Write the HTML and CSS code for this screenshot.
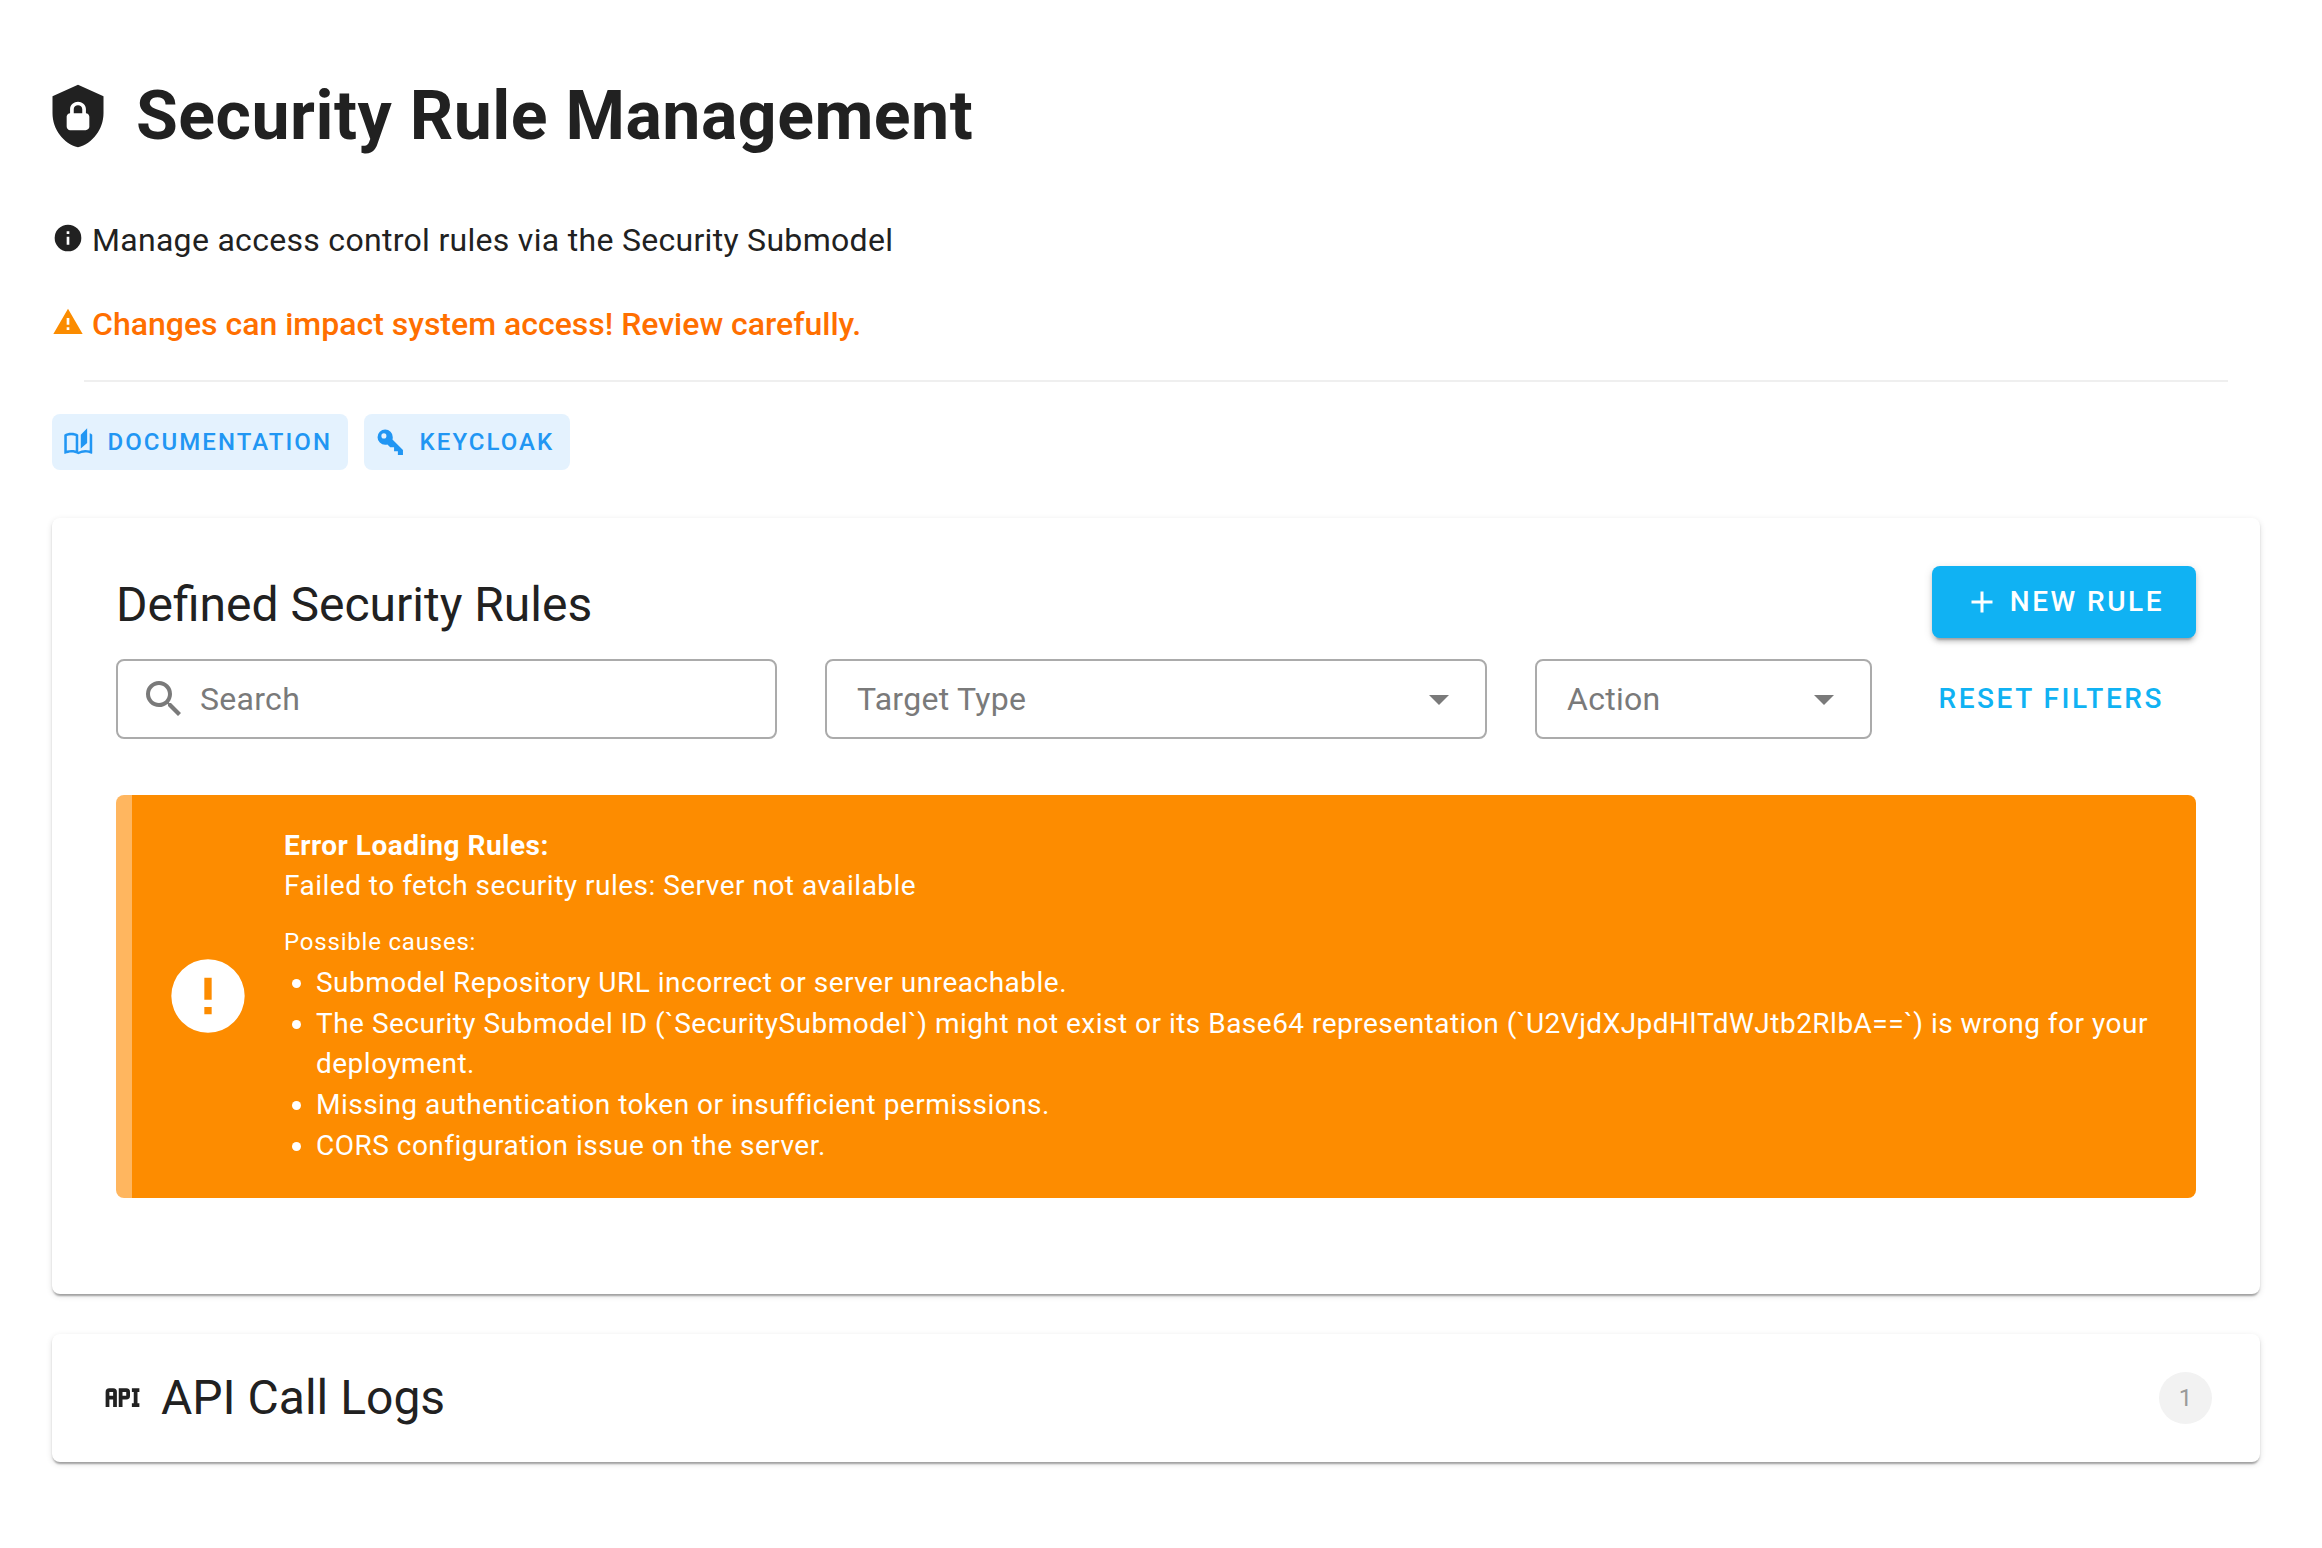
FILE: index.html
```html
<!DOCTYPE html>
<html lang="en">
<head>
<meta charset="utf-8">
<title>Security Rule Management</title>
<link rel="stylesheet" href="styles.css">
</head>
<body>
<main class="page">
  <header class="page-header">
    <h1 class="page-title">
      <svg class="title-icon" viewBox="0 0 24 24"><path d="M12,1L3,5V11C3,16.55 6.84,21.74 12,23C17.16,21.74 21,16.55 21,11V5L12,1M12,7C13.4,7 14.8,8.1 14.8,9.5V11C15.4,11 16,11.6 16,12.3V15.8C16,16.4 15.4,17 14.7,17H9.2C8.6,17 8,16.4 8,15.7V12.2C8,11.6 8.6,11 9.2,11V9.5C9.2,8.1 10.6,7 12,7M12,8.2C11.2,8.2 10.5,8.7 10.5,9.5V11H13.5V9.5C13.5,8.7 12.8,8.2 12,8.2Z"/></svg>
      <span>Security Rule Management</span>
    </h1>
    <p class="note">
      <svg class="note-icon" viewBox="0 0 24 24"><path d="M13,9H11V7H13M13,17H11V11H13M12,2A10,10 0 0,0 2,12A10,10 0 0,0 12,22A10,10 0 0,0 22,12A10,10 0 0,0 12,2Z"/></svg>
      <span>Manage access control rules via the Security Submodel</span>
    </p>
    <p class="note note-warning">
      <svg class="note-icon" viewBox="0 0 24 24"><path d="M13 14H11V9H13M13 18H11V16H13M1 21H23L12 2L1 21Z"/></svg>
      <span>Changes can impact system access! Review carefully.</span>
    </p>
  </header>
  <hr class="divider">
  <nav class="links">
    <a class="link-btn">
      <svg class="link-icon" viewBox="0 0 24 24"><path d="M19 1L14 6V17L19 12.5V1M21 5V18.5C19.9 18.15 18.7 18 17.5 18C15.8 18 13.35 18.65 12 19.5V6C10.55 4.9 8.45 4.5 6.5 4.5C4.55 4.5 2.45 4.9 1 6V20.65C1 20.9 1.25 21.15 1.5 21.15C1.6 21.15 1.65 21.1 1.75 21.1C3.1 20.45 5.05 20 6.5 20C8.45 20 10.55 20.4 12 21.5C13.35 20.65 15.8 20 17.5 20C19.15 20 20.85 20.3 22.25 21.05C22.35 21.1 22.4 21.1 22.5 21.1C22.75 21.1 23 20.85 23 20.6V6C22.4 5.55 21.75 5.25 21 5M10 18.41C8.75 18.09 7.5 18 6.5 18C5.44 18 4.18 18.19 3 18.5V7.13C3.91 6.73 5.14 6.5 6.5 6.5C7.86 6.5 9.09 6.73 10 7.13V18.41Z"/></svg>
      <span>DOCUMENTATION</span>
    </a>
    <a class="link-btn">
      <svg class="link-icon" viewBox="0 0 24 24"><path d="M22,18V22H18V19H15V16H12L9.74,13.74C9.19,13.91 8.61,14 8,14A6,6 0 0,1 2,8A6,6 0 0,1 8,2A6,6 0 0,1 14,8C14,8.61 13.91,9.19 13.74,9.74L22,18M7,5A2,2 0 0,0 5,7A2,2 0 0,0 7,9A2,2 0 0,0 9,7A2,2 0 0,0 7,5Z"/></svg>
      <span>KEYCLOAK</span>
    </a>
  </nav>

  <section class="card rules">
    <div class="rules-head">
      <h2 class="heading">Defined Security Rules</h2>
      <button class="btn btn-primary">
        <svg class="btn-icon" viewBox="0 0 24 24"><path d="M19,13H13V19H11V13H5V11H11V5H13V11H19V13Z"/></svg>
        <span>NEW RULE</span>
      </button>
    </div>
    <div class="filters">
      <div class="field">
        <svg class="field-icon" viewBox="0 0 24 24"><path d="M9.5,3A6.5,6.5 0 0,1 16,9.5C16,11.11 15.41,12.59 14.44,13.73L14.71,14H15.5L20.5,19L19,20.5L14,15.5V14.71L13.73,14.44C12.59,15.41 11.11,16 9.5,16A6.5,6.5 0 0,1 3,9.5A6.5,6.5 0 0,1 9.5,3M9.5,5C7,5 5,7 5,9.5C5,12 7,14 9.5,14C12,14 14,12 14,9.5C14,7 12,5 9.5,5Z"/></svg>
        <span>Search</span>
      </div>
      <div class="field field-select">
        <span>Target Type</span>
        <svg class="field-icon" viewBox="0 0 24 24"><path d="M7,10L12,15L17,10H7Z"/></svg>
      </div>
      <div class="field field-select">
        <span>Action</span>
        <svg class="field-icon" viewBox="0 0 24 24"><path d="M7,10L12,15L17,10H7Z"/></svg>
      </div>
      <button class="btn btn-text">RESET FILTERS</button>
    </div>
    <div class="alert">
      <svg class="alert-icon" viewBox="0 0 24 24"><path d="M13,13H11V7H13M13,17H11V15H13M12,2A10,10 0 0,0 2,12A10,10 0 0,0 12,22A10,10 0 0,0 22,12A10,10 0 0,0 12,2Z"/></svg>
      <div class="alert-body">
        <div class="alert-title">Error Loading Rules:</div>
        <div>Failed to fetch security rules: Server not available</div>
        <div class="alert-caption">Possible causes:</div>
        <ul class="causes">
          <li>Submodel Repository URL incorrect or server unreachable.</li>
          <li>The Security Submodel ID (`SecuritySubmodel`) might not exist or its Base64 representation (`U2VjdXJpdHlTdWJtb2RlbA==`) is wrong for your deployment.</li>
          <li>Missing authentication token or insufficient permissions.</li>
          <li>CORS configuration issue on the server.</li>
        </ul>
      </div>
    </div>
  </section>

  <section class="card logs">
    <svg class="logs-icon" viewBox="0 0 24 24"><path d="M7 7H5A2 2 0 0 0 3 9V17H5V13H7V17H9V9A2 2 0 0 0 7 7M7 11H5V9H7M14 7H10V17H12V13H14A2 2 0 0 0 16 11V9A2 2 0 0 0 14 7M14 11H12V9H14M20 9V15H21V17H17V15H18V9H17V7H21V9Z"/></svg>
    <h2 class="heading">API Call Logs</h2>
    <span class="count">1</span>
  </section>
</main>
</body>
</html>
```
FILE: styles.css
```css
* { box-sizing: border-box; margin: 0; padding: 0; }

body {
  background: #fff;
  color: #212121;
  font-family: Roboto, "Liberation Sans", sans-serif;
  font-size: 32px;
}

svg { display: block; flex: none; fill: currentColor; }

.page { padding: 76px 62px 84px 52px; }

.page-title {
  display: flex;
  align-items: center;
  gap: 24px;
  height: 80px;
  margin-left: -8px;
  font-size: 68px;
  font-weight: 700;
  line-height: 80px;
  letter-spacing: 0.5px;
}
.title-icon { width: 68px; height: 68px; margin-bottom: 1px; }

.note {
  display: flex;
  align-items: center;
  gap: 8px;
  height: 56px;
  margin-top: 56px;
  line-height: 56px;
  letter-spacing: 0.3px;
}
.note-icon { width: 32px; height: 32px; margin-bottom: 4px; }
.note-warning { margin-top: 28px; color: #ff6f00; font-weight: 500; letter-spacing: 0; }
.note-warning .note-icon { color: #fb8c00; }

.divider {
  height: 2px;
  margin: 28px 32px 0;
  border: 0;
  background: #efefef;
}

.links { display: flex; gap: 16px; margin-top: 32px; }
.link-btn {
  display: flex;
  align-items: center;
  gap: 14.5px;
  height: 56px;
  padding: 0 16px 0 10.5px;
  border-radius: 8px;
  background: #e4f2fe;
  color: #2196f3;
  font-size: 24px;
  font-weight: 500;
  letter-spacing: 2.06px;
}
.link-icon { width: 30.5px; height: 30.5px; }

.card {
  border-radius: 8px;
  background: #fff;
  box-shadow: 0 4px 2px -2px rgba(0, 0, 0, .2), 0 2px 2px 0 rgba(0, 0, 0, .14), 0 2px 6px 0 rgba(0, 0, 0, .12);
}

.rules { height: 776px; margin-top: 48px; padding: 48px 64px 0; }
.rules-head { display: flex; justify-content: space-between; align-items: center; height: 72px; }
.heading { font-size: 48px; font-weight: 400; line-height: 64px; }
.rules-head .heading { padding-top: 5px; }

.btn {
  display: flex;
  align-items: center;
  justify-content: center;
  height: 72px;
  padding: 0 32px;
  border: 0;
  border-radius: 8px;
  background: none;
  font-family: inherit;
  font-size: 28px;
  font-weight: 500;
  letter-spacing: 2.5px;
}
.btn-primary {
  gap: 10px;
  padding-bottom: 1px;
  background: #10b2f3;
  color: #fff;
  box-shadow: 0 6px 2px -4px rgba(0, 0, 0, .2), 0 4px 4px 0 rgba(0, 0, 0, .14), 0 2px 10px 0 rgba(0, 0, 0, .12);
}
.btn-icon { width: 36px; height: 36px; }
.btn-text { justify-content: flex-end; padding-bottom: 2px; color: #10b2f3; letter-spacing: 2.55px; }

.filters {
  display: grid;
  grid-template-columns: 661px 662px 337px 1fr;
  column-gap: 48px;
  align-items: center;
  margin-top: 21px;
}
.filters .btn-text { margin-left: -20px; }
.field {
  display: flex;
  align-items: center;
  height: 80px;
  padding: 0 22px 1px;
  border: 2px solid #ababab;
  border-radius: 8px;
  color: #7a7a7a;
  letter-spacing: 0.3px;
}
.field-icon { width: 48px; height: 48px; margin-right: 12px; }
.field-select { justify-content: space-between; padding: 0 22px 1px 30px; }
.field-select .field-icon { margin-right: 0; }

.alert {
  display: flex;
  align-items: center;
  gap: 32px;
  height: 403px;
  margin-top: 56px;
  padding: 0 32px;
  border-left: 16px solid #ffb65f;
  border-radius: 8px;
  background: #fd8c00;
  color: #fff;
  font-size: 28px;
  line-height: 40px;
  letter-spacing: 0.49px;
}
.alert-icon { width: 88px; height: 88px; margin-bottom: 1px; }
.alert-title { font-weight: 700; }
.alert-caption { margin-top: 16px; font-size: 24px; letter-spacing: 0.8px; }
.causes { margin-top: 1px; padding-left: 32px; list-style: disc; }
.causes li { margin-bottom: 1px; }

.logs {
  display: flex;
  align-items: center;
  height: 128px;
  margin-top: 40px;
  padding: 0 48px;
}
.logs-icon { width: 45px; height: 45px; margin-bottom: 1px; }
.logs .heading { margin-left: 16px; }
.count {
  display: flex;
  align-items: center;
  justify-content: center;
  width: 53px;
  height: 52px;
  margin-left: auto;
  border-radius: 50%;
  background: #f2f2f2;
  color: #9a9a9a;
  font-size: 24px;
}
```
